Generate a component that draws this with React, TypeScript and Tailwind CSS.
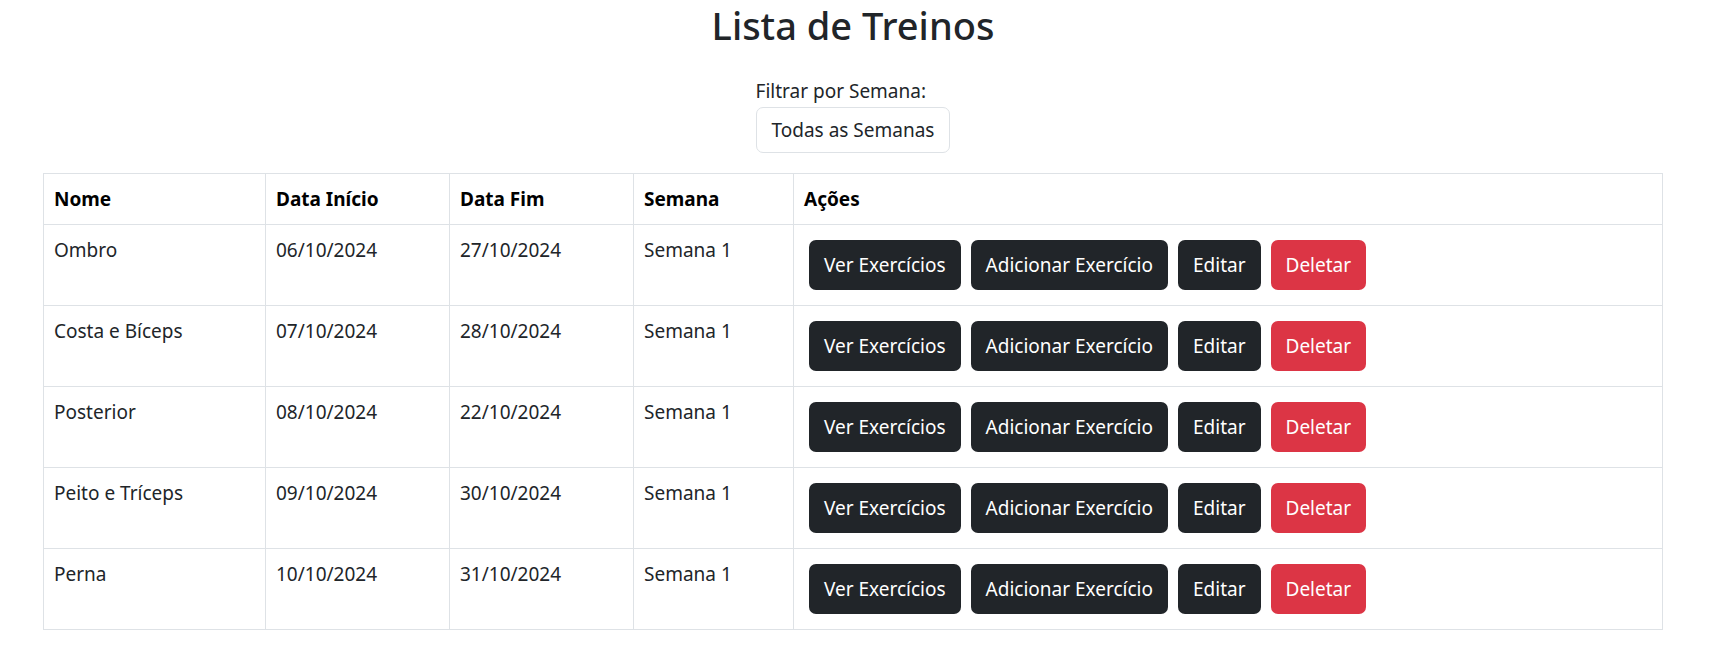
const treinos = [
  { nome: "Ombro", inicio: "06/10/2024", fim: "27/10/2024", semana: "Semana 1" },
  { nome: "Costa e Bíceps", inicio: "07/10/2024", fim: "28/10/2024", semana: "Semana 1" },
  { nome: "Posterior", inicio: "08/10/2024", fim: "22/10/2024", semana: "Semana 1" },
  { nome: "Peito e Tríceps", inicio: "09/10/2024", fim: "30/10/2024", semana: "Semana 1" },
  { nome: "Perna", inicio: "10/10/2024", fim: "31/10/2024", semana: "Semana 1" },
];

export default function App() {
  return (
    <div className="min-h-screen bg-white pl-[43px] pr-[55px] font-['Noto_Sans',sans-serif] text-[19px] leading-[30px] text-[#212529]">
      <h1 className="pt-px text-center text-[38px] leading-[48px] font-medium">
        Lista de Treinos
      </h1>
      <div className="mt-[27px] flex justify-center">
        <div className="flex flex-col items-start">
          <label>Filtrar por Semana:</label>
          <div className="mt-px rounded-[7px] border border-[#dee2e6] px-[15px] py-[7px]">
            Todas as Semanas
          </div>
        </div>
      </div>
      <table className="mt-[20px] w-full border-collapse border border-[#dee2e6]">
        <thead>
          <tr className="text-left font-bold text-black">
            <th className="w-[222px] border border-[#dee2e6] p-[10px]">Nome</th>
            <th className="w-[184px] border border-[#dee2e6] p-[10px]">Data Início</th>
            <th className="w-[184px] border border-[#dee2e6] p-[10px]">Data Fim</th>
            <th className="w-[160px] border border-[#dee2e6] p-[10px]">Semana</th>
            <th className="border border-[#dee2e6] p-[10px]">Ações</th>
          </tr>
        </thead>
        <tbody>
          {treinos.map((t) => (
            <tr key={t.nome} className="align-top">
              <td className="border border-[#dee2e6] p-[10px]">{t.nome}</td>
              <td className="border border-[#dee2e6] p-[10px]">{t.inicio}</td>
              <td className="border border-[#dee2e6] p-[10px]">{t.fim}</td>
              <td className="border border-[#dee2e6] p-[10px]">{t.semana}</td>
              <td className="border border-[#dee2e6] p-[10px]">
                <div className="flex gap-[10px] px-[5px] py-[5px]">
                  <button className="h-[50px] rounded-[7px] bg-[#212529] px-[15px] text-white">
                    Ver Exercícios
                  </button>
                  <button className="h-[50px] rounded-[7px] bg-[#212529] px-[15px] text-white">
                    Adicionar Exercício
                  </button>
                  <button className="h-[50px] rounded-[7px] bg-[#212529] px-[15px] text-white">
                    Editar
                  </button>
                  <button className="h-[50px] rounded-[7px] bg-[#dc3545] px-[15px] text-white">
                    Deletar
                  </button>
                </div>
              </td>
            </tr>
          ))}
        </tbody>
      </table>
    </div>
  );
}
